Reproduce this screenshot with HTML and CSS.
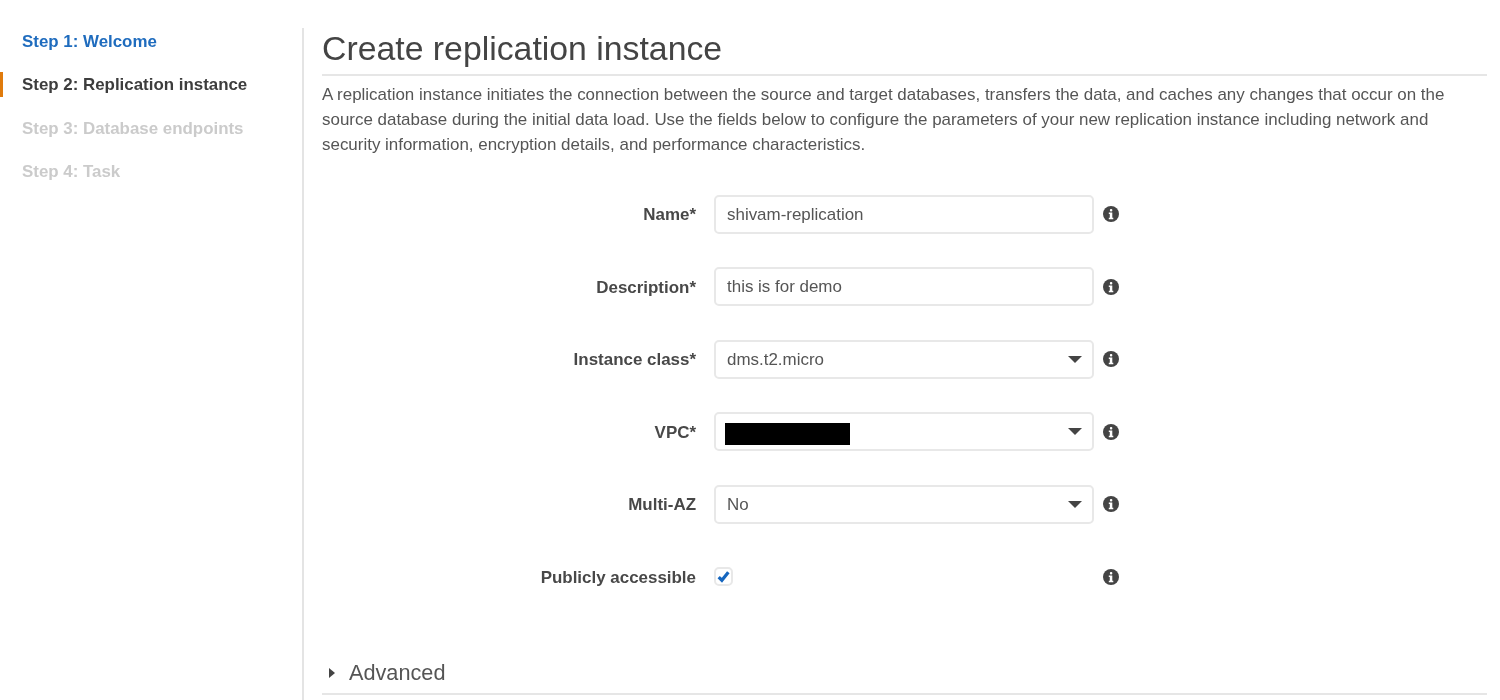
FILE: index.html
```html
<!DOCTYPE html>
<html lang="en">
<head>
  <meta charset="UTF-8">
  <title>Create replication instance</title>
  <link rel="stylesheet" href="styles.css">
</head>
<body>
  <div class="container">
    <nav class="steps">
      <a class="step step-done">Step 1: Welcome</a>
      <a class="step step-active">Step 2: Replication instance</a>
      <a class="step step-todo">Step 3: Database endpoints</a>
      <a class="step step-todo">Step 4: Task</a>
    </nav>

    <main class="content">
      <h1 class="title">Create replication instance</h1>
      <p class="intro">A replication instance initiates the connection between the source and target databases, transfers the data, and caches any changes that occur on the source database during the initial data load. Use the fields below to configure the parameters of your new replication instance including network and security information, encryption details, and performance characteristics.</p>

      <div class="form">
        <div class="row">
          <label class="label">Name*</label>
          <div class="field">shivam-replication</div>
          <svg class="info" viewBox="0 0 16 16"><circle cx="8" cy="8" r="8"/><rect class="info-mark" x="6.9" y="3" width="2.4" height="2.4" rx="1"/><path class="info-mark" d="M5.8 6.6h3.5v5.2h1v1.4H5.8v-1.4h1V8H5.8z"/></svg>
        </div>
        <div class="row">
          <label class="label">Description*</label>
          <div class="field">this is for demo</div>
          <svg class="info" viewBox="0 0 16 16"><circle cx="8" cy="8" r="8"/><rect class="info-mark" x="6.9" y="3" width="2.4" height="2.4" rx="1"/><path class="info-mark" d="M5.8 6.6h3.5v5.2h1v1.4H5.8v-1.4h1V8H5.8z"/></svg>
        </div>
        <div class="row">
          <label class="label">Instance class*</label>
          <div class="field field-select">dms.t2.micro<span class="caret"></span></div>
          <svg class="info" viewBox="0 0 16 16"><circle cx="8" cy="8" r="8"/><rect class="info-mark" x="6.9" y="3" width="2.4" height="2.4" rx="1"/><path class="info-mark" d="M5.8 6.6h3.5v5.2h1v1.4H5.8v-1.4h1V8H5.8z"/></svg>
        </div>
        <div class="row">
          <label class="label">VPC*</label>
          <div class="field field-select"><span class="redacted"></span><span class="caret"></span></div>
          <svg class="info" viewBox="0 0 16 16"><circle cx="8" cy="8" r="8"/><rect class="info-mark" x="6.9" y="3" width="2.4" height="2.4" rx="1"/><path class="info-mark" d="M5.8 6.6h3.5v5.2h1v1.4H5.8v-1.4h1V8H5.8z"/></svg>
        </div>
        <div class="row">
          <label class="label">Multi-AZ</label>
          <div class="field field-select">No<span class="caret"></span></div>
          <svg class="info" viewBox="0 0 16 16"><circle cx="8" cy="8" r="8"/><rect class="info-mark" x="6.9" y="3" width="2.4" height="2.4" rx="1"/><path class="info-mark" d="M5.8 6.6h3.5v5.2h1v1.4H5.8v-1.4h1V8H5.8z"/></svg>
        </div>
        <div class="row">
          <label class="label">Publicly accessible</label>
          <div class="check-wrap">
            <span class="checkbox">
              <svg class="check" viewBox="0 0 14 14"><path d="M2.5 7.5l3 3 6-7.5"/></svg>
            </span>
          </div>
          <svg class="info" viewBox="0 0 16 16"><circle cx="8" cy="8" r="8"/><rect class="info-mark" x="6.9" y="3" width="2.4" height="2.4" rx="1"/><path class="info-mark" d="M5.8 6.6h3.5v5.2h1v1.4H5.8v-1.4h1V8H5.8z"/></svg>
        </div>
      </div>

      <div class="advanced">
        <span class="arrow"></span>
        <span class="advanced-label">Advanced</span>
      </div>
    </main>
  </div>
</body>
</html>
```

FILE: styles.css
```css
body {
  margin: 0;
  padding: 0;
  height: 700px;
  overflow: hidden;
  font-family: 'Liberation Sans', Arial, sans-serif;
  background: white;
  color: #444;
}

/* the reference is a scaled-up, soft screenshot */
.container {
  display: flex;
  padding-top: 28px;
  filter: blur(0.6px);
}

.steps {
  width: 304px;
  height: 672px;
  flex-shrink: 0;
  box-sizing: border-box;
  border-right: 2px solid #e4e4e4;
  display: flex;
  flex-direction: column;
  gap: 18.4px;
  padding-top: 1px;
}

.step {
  display: block;
  height: 25px;
  line-height: 25px;
  padding-left: 22px;
  font-size: 16.9px;
  font-weight: 700;
}

.step-done {
  color: #1f6cbe;
}

.step-active {
  color: #3d3d3d;
  border-left: 3px solid #e07b0c;
  padding-left: 19px;
}

.step-todo {
  color: #cbcbcb;
}

.content {
  width: 1165px;
  margin-left: 18px;
}

.title {
  margin: 0;
  font-size: 33.8px;
  font-weight: 400;
  line-height: 41px;
  height: 46px;
  color: #444;
  border-bottom: 2px solid #e6e6e6;
}

.intro {
  margin: 6px 0 0;
  font-size: 16.95px;
  line-height: 25.2px;
  color: #555;
}

.form {
  margin-top: 37px;
  display: flex;
  flex-direction: column;
  gap: 33.5px;
}

.row {
  display: grid;
  grid-template-columns: 374px 380px 34px;
  column-gap: 18px;
  align-items: center;
  height: 39px;
}

.row .info {
  margin-left: -9px;
}

.label {
  text-align: right;
  padding-top: 2px;
  font-size: 16.95px;
  font-weight: 700;
  color: #484848;
}

.field {
  box-sizing: border-box;
  height: 39px;
  line-height: 35px;
  padding-left: 11px;
  border: 2px solid #e8e8e8;
  border-radius: 5px;
  font-size: 16.95px;
  color: #555;
  position: relative;
}

.caret {
  position: absolute;
  right: 10px;
  top: 14px;
  width: 0;
  height: 0;
  border-left: 7px solid transparent;
  border-right: 7px solid transparent;
  border-top: 7px solid #444;
}

.redacted {
  display: inline-block;
  vertical-align: top;
  width: 125px;
  height: 22px;
  margin: 9px 0 0 -2px;
  background: black;
}

.check-wrap {
  display: flex;
  align-items: center;
}

.checkbox {
  box-sizing: border-box;
  width: 19px;
  height: 19px;
  border: 2px solid #e8e8e8;
  border-radius: 5px;
  display: flex;
  align-items: center;
  justify-content: center;
}

.check {
  width: 15px;
  height: 15px;
  flex-shrink: 0;
  fill: none;
  stroke: #1566bf;
  stroke-width: 3;
}

.info {
  width: 16px;
  height: 16px;
  fill: #444;
}

.info-mark {
  fill: white;
}

.advanced {
  margin-top: 56px;
  height: 41px;
  display: flex;
  align-items: center;
  border-bottom: 2px solid #e6e6e6;
}

.arrow {
  width: 0;
  height: 0;
  margin-left: 7px;
  border-top: 5px solid transparent;
  border-bottom: 5px solid transparent;
  border-left: 6px solid #444;
}

.advanced-label {
  margin-left: 14px;
  font-size: 21.7px;
  color: #555;
}
```
